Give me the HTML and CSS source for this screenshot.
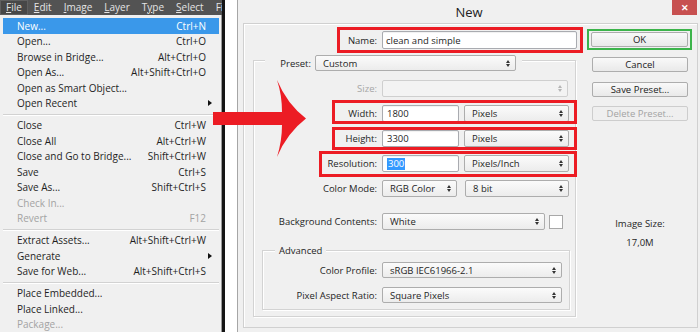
FILE: index.html
```html
<!DOCTYPE html>
<html>
<head>
  <title>New</title>
  <link rel="stylesheet" href="styles.css">
</head>
<body>
  <div class="screen">
    <div class="ps">
      <div class="menubar">
        <span class="mb-item active"><u>F</u>ile</span>
        <span class="mb-item"><u>E</u>dit</span>
        <span class="mb-item"><u>I</u>mage</span>
        <span class="mb-item"><u>L</u>ayer</span>
        <span class="mb-item">T<u>y</u>pe</span>
        <span class="mb-item"><u>S</u>elect</span>
        <span class="mb-item">Fi</span>
      </div>
      <div class="dropdown">
        <div class="mi hot"><span>New...</span><span>Ctrl+N</span></div>
        <div class="mi"><span>Open...</span><span>Ctrl+O</span></div>
        <div class="mi"><span>Browse in Bridge...</span><span>Alt+Ctrl+O</span></div>
        <div class="mi"><span>Open As...</span><span>Alt+Shift+Ctrl+O</span></div>
        <div class="mi"><span>Open as Smart Object...</span></div>
        <div class="mi"><span>Open Recent</span><span class="sub"></span></div>
        <div class="sep"></div>
        <div class="mi"><span>Close</span><span>Ctrl+W</span></div>
        <div class="mi"><span>Close All</span><span>Alt+Ctrl+W</span></div>
        <div class="mi"><span>Close and Go to Bridge...</span><span>Shift+Ctrl+W</span></div>
        <div class="mi"><span>Save</span><span>Ctrl+S</span></div>
        <div class="mi"><span>Save As...</span><span>Shift+Ctrl+S</span></div>
        <div class="mi off"><span>Check In...</span></div>
        <div class="mi off"><span>Revert</span><span>F12</span></div>
        <div class="sep"></div>
        <div class="mi"><span>Extract Assets...</span><span>Alt+Shift+Ctrl+W</span></div>
        <div class="mi"><span>Generate</span><span class="sub"></span></div>
        <div class="mi"><span>Save for Web...</span><span>Alt+Shift+Ctrl+S</span></div>
        <div class="sep"></div>
        <div class="mi"><span>Place Embedded...</span></div>
        <div class="mi"><span>Place Linked...</span></div>
        <div class="mi off"><span>Package...</span></div>
      </div>
    </div>

    <div class="gutter"></div>

    <div class="dialog">
      <div class="titlebar">
        <span></span>
        <span class="title">New</span>
        <span class="close">&#10005;</span>
      </div>
      <div class="panel">
        <div class="form">
          <div class="name-row">
            <span class="lab">Name:</span>
            <div class="field name-field">clean and simple</div>
          </div>

          <div class="group">
            <div class="group-head">
              <span class="lab preset-lab">Preset:</span>
              <div class="select preset-sel"><span>Custom</span><span class="arr"></span></div>
            </div>

            <div class="grow first">
              <span class="lab dim">Size:</span>
              <div class="select off size-sel"><span></span><span class="arr"></span></div>
            </div>
            <div class="grow">
              <span class="lab">Width:</span>
              <div class="field num">1800</div>
              <div class="select unit"><span>Pixels</span><span class="arr"></span></div>
            </div>
            <div class="grow">
              <span class="lab">Height:</span>
              <div class="field num">3300</div>
              <div class="select unit"><span>Pixels</span><span class="arr"></span></div>
            </div>
            <div class="grow">
              <span class="lab">Resolution:</span>
              <div class="field num"><span class="picked">300</span></div>
              <div class="select unit"><span>Pixels/Inch</span><span class="arr"></span></div>
            </div>
            <div class="grow">
              <span class="lab">Color Mode:</span>
              <div class="select mode-sel"><span>RGB Color</span><span class="arr"></span></div>
              <div class="select bits-sel"><span>8 bit</span><span class="arr"></span></div>
            </div>
            <div class="grow bg-row">
              <span class="lab">Background Contents:</span>
              <div class="select bg-sel"><span>White</span><span class="arr"></span></div>
              <div class="swatch"></div>
            </div>

            <div class="adv">
              <div class="adv-head">Advanced</div>
              <div class="arow first">
                <span class="lab">Color Profile:</span>
                <div class="select adv-sel"><span>sRGB IEC61966-2.1</span><span class="arr"></span></div>
              </div>
              <div class="arow">
                <span class="lab">Pixel Aspect Ratio:</span>
                <div class="select adv-sel"><span>Square Pixels</span><span class="arr"></span></div>
              </div>
            </div>
          </div>
        </div>

        <div class="side">
          <div class="ok-frame"><div class="btn">OK</div></div>
          <div class="btn side-btn cancel">Cancel</div>
          <div class="btn side-btn save">Save Preset...</div>
          <div class="btn side-btn delete off">Delete Preset...</div>
          <div class="imgsize">
            <div>Image Size:</div>
            <div>17,0M</div>
          </div>
        </div>
      </div>
    </div>
  </div>

  <!-- annotations drawn over the screenshot -->
  <div class="mark mark-name"></div>
  <div class="mark mark-width"></div>
  <div class="mark mark-height"></div>
  <div class="mark mark-res"></div>
  <svg class="arrow" width="700" height="332" viewBox="0 0 700 332">
    <path d="M213 112 L282 112 Q282 95 277 80 Q287 104 306 118.5 Q287 133 277 157 Q282 141 282 125 L213 125 Z" fill="#ec1c24"/>
  </svg>
</body>
</html>
```

FILE: styles.css
```css
body {
  margin: 0;
  width: 700px;
  height: 332px;
  overflow: hidden;
  position: relative;
  font-family: "Open Sans", "Liberation Sans", sans-serif;
  font-size: 9.5px;
  color: #1f1f1f;
}

.screen {
  display: flex;
  height: 332px;
}

/* photoshop menu */
.ps {
  width: 222px;
  display: flex;
  flex-direction: column;
}

.menubar {
  height: 18px;
  background: #535353;
  display: flex;
  align-items: center;
  color: #e4e4e4;
  font-size: 10px;
  overflow: hidden;
  white-space: nowrap;
}

.mb-item {
  padding: 0 6px;
  line-height: 15px;
}

.mb-item.active {
  background: #474747;
  box-shadow: inset 0 0 0 1px #5f5f5f;
}

.dropdown {
  flex: 1;
  background: #f0f0f0;
  border-right: 1px solid #9a9a9a;
  padding-top: 3px;
  font-size: 10px;
}

.mi {
  height: 15.5px;
  margin: 0 2px 0 3px;
  padding: 0 13px 0 14px;
  display: flex;
  align-items: center;
  justify-content: space-between;
  white-space: nowrap;
}

.mi.hot {
  background: #3a98ea;
  color: #fff;
}

.mi.off {
  color: #a3a3a3;
}

.sub {
  width: 0;
  height: 0;
  margin-right: -6px;
  border-top: 3.5px solid transparent;
  border-bottom: 3.5px solid transparent;
  border-left: 4px solid #111;
}

.sep {
  margin: 2.5px 2px 2px 3px;
  border-top: 1px solid #d2d2d2;
  border-bottom: 1px solid #fff;
}

.gutter {
  width: 15px;
  background: #fff;
  border-left: 3px solid #151515;
  box-sizing: border-box;
}

/* New dialog */
.dialog {
  width: 463px;
  background: #f0f0f0;
  border-left: 1px solid #a6a6a6;
  box-sizing: border-box;
  display: flex;
  flex-direction: column;
}

.titlebar {
  height: 23px;
  display: grid;
  grid-template-columns: 1fr auto 1fr;
  align-items: center;
}

.title {
  font-size: 13px;
  color: #222;
  margin-top: 1px;
}

.close {
  justify-self: end;
  align-self: start;
  width: 25px;
  height: 15px;
  margin-right: 3px;
  background: #c75050;
  color: #fff;
  font-size: 9px;
  font-weight: bold;
  display: flex;
  align-items: center;
  justify-content: center;
}

.panel {
  flex: 1;
  margin: 0 2px 4px 5px;
  border: 1px solid #d0d0d0;
  box-shadow: inset 1px 1px 0 #fff;
  display: flex;
}

.form {
  width: 339px;
  padding-top: 7px;
}

.lab {
  text-align: right;
  margin-right: 5px;
  white-space: nowrap;
}

.lab.dim {
  color: #a6a6a6;
}

.name-row {
  display: flex;
  align-items: center;
  height: 18px;
}

.name-row .lab {
  width: 133px;
}

.field {
  height: 100%;
  background: #fff;
  border: 1px solid #a9abb0;
  border-radius: 2px;
  box-sizing: border-box;
  padding-left: 3px;
  display: flex;
  align-items: center;
  box-shadow: inset 0 1px 1px rgba(0, 0, 0, 0.06);
}

.name-field {
  width: 195px;
}

.picked {
  background: #3399ff;
  color: #fff;
  padding: 0 1px;
  line-height: 12px;
}

.select {
  height: 100%;
  box-sizing: border-box;
  border: 1px solid #adadad;
  border-radius: 2px;
  background: linear-gradient(#fbfbfb, #ececec);
  padding: 0 5px 0 7px;
  display: flex;
  align-items: center;
  justify-content: space-between;
  white-space: nowrap;
}

.select.off {
  border-color: #cfcfcf;
  background: #f3f3f3;
}

.arr {
  display: flex;
  flex-direction: column;
  gap: 1px;
}

.arr::before,
.arr::after {
  content: "";
  width: 0;
  height: 0;
  border-left: 2.5px solid transparent;
  border-right: 2.5px solid transparent;
}

.arr::before {
  border-bottom: 3px solid #333;
}

.arr::after {
  border-top: 3px solid #333;
}

.select.off .arr::before {
  border-bottom-color: #b5b5b5;
}

.select.off .arr::after {
  border-top-color: #b5b5b5;
}

.group {
  margin: 11px 0 0 9px;
  width: 323px;
  box-sizing: border-box;
  border: 1px solid #d3d3d3;
  box-shadow: inset 1px 1px 0 #fff, 1px 1px 0 #fff;
  padding-bottom: 6px;
}

.group-head {
  display: flex;
  align-items: center;
  height: 16px;
  width: max-content;
  margin: -6px 0 0 11px;
  padding-right: 6px;
  background: #f0f0f0;
}

.preset-lab {
  width: 46px;
  margin-right: 4px;
}

.preset-sel {
  width: 201px;
}

.grow {
  display: flex;
  align-items: center;
  height: 17px;
  margin-top: 8px;
}

.grow.first {
  margin-top: 9px;
}

.grow .lab {
  width: 123px;
}

.size-sel {
  width: 186px;
}

.num {
  width: 77px;
  padding-left: 4px;
}

.unit {
  width: 105px;
  margin-left: 5px;
}

.mode-sel {
  width: 75px;
}

.bits-sel {
  width: 104px;
  margin-left: 8px;
}

.grow.bg-row {
  margin-top: 16px;
}

.bg-sel {
  width: 163px;
}

.swatch {
  width: 14px;
  height: 14px;
  margin-left: 4px;
  background: #fff;
  border: 1px solid #a8a8a8;
  box-sizing: border-box;
}

.adv {
  margin: 20px 0 0 8px;
  width: 308px;
  box-sizing: border-box;
  border: 1px solid #d3d3d3;
  box-shadow: inset 1px 1px 0 #fff, 1px 1px 0 #fff;
  padding-bottom: 6px;
}

.adv-head {
  width: max-content;
  margin: -7px 0 0 12px;
  padding: 0 4px;
  line-height: 14px;
  background: #f0f0f0;
}

.arow {
  display: flex;
  align-items: center;
  height: 16px;
  margin-top: 9px;
}

.arow.first {
  margin-top: 4px;
}

.arow .lab {
  width: 114px;
}

.adv-sel {
  width: 180px;
}

/* buttons column */
.side {
  flex: 1;
  padding: 5px 0 0 4px;
}

.ok-frame {
  width: 105px;
  box-sizing: border-box;
  border: 2px solid #3cb44b;
  padding: 1px 2px;
}

.btn {
  height: 15px;
  box-sizing: border-box;
  border: 1px solid #adadad;
  border-radius: 2px;
  background: linear-gradient(#f9f9f9, #e9e9e9);
  display: flex;
  align-items: center;
  justify-content: center;
  color: #1b1b1b;
}

.side-btn {
  width: 96px;
  margin-left: 5px;
}

.cancel {
  margin-top: 7px;
}

.save {
  margin-top: 10px;
}

.delete {
  margin-top: 9px;
}

.btn.off {
  color: #a3a3a3;
  border-color: #cdcdcd;
  background: #efefef;
}

.imgsize {
  width: 96px;
  margin: 93px 0 0 5px;
  text-align: center;
  line-height: 19px;
}

/* annotations */
.mark {
  position: absolute;
  border: 3px solid #ec1c24;
  box-sizing: border-box;
}

.mark-name {
  left: 337px;
  top: 27px;
  width: 246px;
  height: 26px;
}

.mark-width {
  left: 332px;
  top: 100px;
  width: 245px;
  height: 24px;
}

.mark-height {
  left: 332px;
  top: 127px;
  width: 245px;
  height: 23px;
}

.mark-res {
  left: 319px;
  top: 151px;
  width: 258px;
  height: 26px;
}

.arrow {
  position: absolute;
  left: 0;
  top: 0;
}
```
